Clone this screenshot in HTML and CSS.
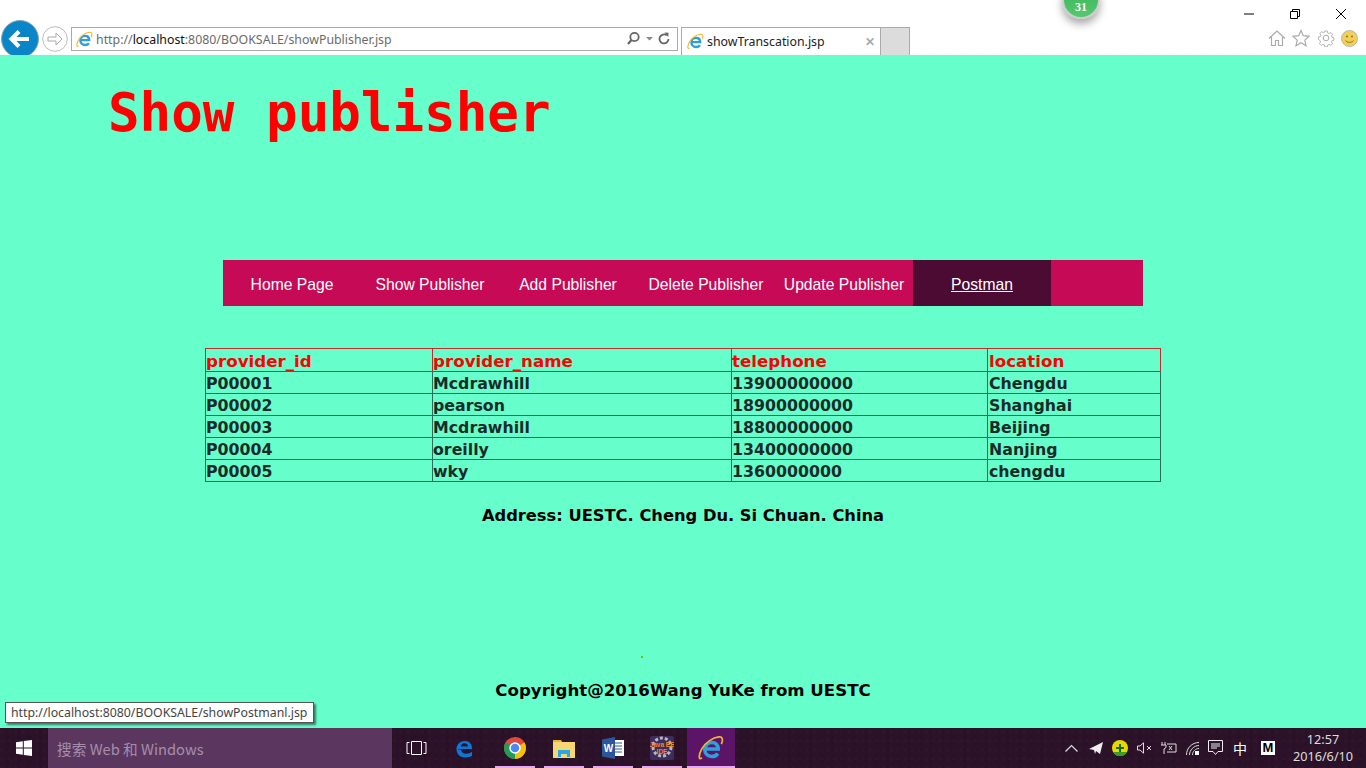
FILE: index.html
```html
<!DOCTYPE html>
<html lang="en">
<head>
<meta charset="utf-8">
<title>Show publisher</title>
<link rel="stylesheet" href="styles.css">
</head>
<body>
<svg class="defs" width="0" height="0" aria-hidden="true">
  <symbol id="ie" viewBox="0 0 20 20">
    <path d="M5 10.800h10.500c0-3.200-2-5-4.800-5-3.100 0-5.500 2.300-5.500 5.400 0 3.100 2.300 5.300 5.500 5.300 2 0 3.600-.8 4.500-2.300" fill="none" stroke="#2f9fdc" stroke-width="2.800"/>
    <path d="M3 17.500C0 20 .5 15 3 10.500 6 5.500 11.500 2 16 1.500c3-.3 3.500 2 2 5.500" fill="none" stroke="#f2b632" stroke-width="1.300"/>
  </symbol>
</svg>

<header class="chrome">
  <div class="nav-group">
    <svg class="back" width="38" height="38" viewBox="0 0 38 38">
      <circle cx="19" cy="19" r="18.500" fill="#0a86c8" stroke="#8aa" stroke-width="1"/>
      <path d="M28 19H11M18 11.500 10.500 19l7.500 7.500" fill="none" stroke="#fff" stroke-width="4"/>
    </svg>
    <svg class="forward" width="26" height="26" viewBox="0 0 26 26">
      <circle cx="13" cy="13" r="12.300" fill="#fff" stroke="#bbb"/>
      <path d="M6 11h8V7l6 6-6 6v-4H6z" fill="#fff" stroke="#aaa"/>
    </svg>
    <div class="address">
      <svg class="favicon" width="17" height="17"><use href="#ie"/></svg>
      <span class="url">http://<b>localhost</b>:8080/BOOKSALE/showPublisher.jsp</span>
      <svg class="addr-icons" width="44" height="16" viewBox="0 0 44 16">
        <circle cx="7.500" cy="6" r="4.200" fill="none" stroke="#666" stroke-width="1.800"/>
        <path d="M4.500 9 1 13" stroke="#666" stroke-width="2.200"/>
        <path d="M19 6h7l-3.500 3.500z" fill="#888"/>
        <path d="M41.500 8a4.500 4.500 0 1 1-1.700-3.600" fill="none" stroke="#666" stroke-width="1.800"/>
        <path d="M37.500 1.500l4 .2-.2 4.300z" fill="#666"/>
      </svg>
    </div>
    <div class="tab">
      <svg class="favicon" width="17" height="17"><use href="#ie"/></svg>
      <span class="tab-title">showTranscation.jsp</span>
      <span class="tab-close">✕</span>
    </div>
    <div class="new-tab"></div>
  </div>
  <div class="right-group">
    <div class="win-controls">
      <svg width="12" height="12" viewBox="0 0 12 12"><path d="M1 6h10" stroke="#000"/></svg>
      <svg width="12" height="12" viewBox="0 0 12 12"><path d="M1.500 3.500h7v7h-7zM3.500 3.500v-2h7v7h-2" fill="none" stroke="#000"/></svg>
      <svg width="12" height="12" viewBox="0 0 12 12"><path d="M1 1l10 10M11 1 1 11" stroke="#000"/></svg>
    </div>
    <div class="tools">
      <svg width="18" height="18" viewBox="0 0 18 18"><path d="M1 9.500 9 2l8 7.500M3.500 8v8.500h4v-5h3v5h4V8" fill="none" stroke="#aaa" stroke-width="1.200"/></svg>
      <svg width="18" height="18" viewBox="0 0 18 18"><path d="M9 1.500l2.300 5.200 5.700.6-4.200 3.800 1.200 5.600L9 13.800 4 16.700l1.200-5.600L1 7.300l5.700-.6z" fill="none" stroke="#aaa" stroke-width="1.200"/></svg>
      <svg width="18" height="18" viewBox="0 0 18 18"><circle cx="9" cy="9" r="2.800" fill="none" stroke="#aaa"/><path d="M7.500 1h3l.4 2.300 1.600.7 2-1.300 2 2.100-1.300 2 .7 1.500 2.100.4v2.800l-2.100.4-.7 1.600 1.300 2-2 2-2-1.300-1.600.7-.4 2.100h-3l-.4-2.100-1.600-.7-2 1.300-2-2 1.300-2-.7-1.600L.5 10.500V7.700l2.100-.4.700-1.500-1.300-2 2-2.100 2 1.300 1.600-.7z" fill="none" stroke="#aaa" transform="translate(1.100 1.100) scale(.88)"/></svg>
      <svg width="17" height="17" viewBox="0 0 17 17"><circle cx="8.500" cy="8.500" r="8" fill="#f2cf5b" stroke="#b9b9a0"/><circle cx="6" cy="6.500" r="1" fill="#8a7420"/><circle cx="11" cy="6.500" r="1" fill="#8a7420"/><path d="M4.500 10.500c1.500 2.500 6.500 2.500 8 0" fill="none" stroke="#8a7420"/></svg>
    </div>
  </div>
  <div class="badge"><span>31</span></div>
</header>

<main class="page">
  <h1 class="title">Show publisher</h1>
  <nav class="menu">
    <a class="menu-item">Home Page</a>
    <a class="menu-item">Show Publisher</a>
    <a class="menu-item">Add Publisher</a>
    <a class="menu-item">Delete Publisher</a>
    <a class="menu-item">Update Publisher</a>
    <a class="menu-item active">Postman</a>
  </nav>
  <table class="data">
    <colgroup><col class="c1"><col class="c2"><col class="c3"><col class="c4"></colgroup>
    <thead>
      <tr><th>provider_id</th><th>provider_name</th><th>telephone</th><th>location</th></tr>
    </thead>
    <tbody>
      <tr><td>P00001</td><td>Mcdrawhill</td><td>13900000000</td><td>Chengdu</td></tr>
      <tr><td>P00002</td><td>pearson</td><td>18900000000</td><td>Shanghai</td></tr>
      <tr><td>P00003</td><td>Mcdrawhill</td><td>18800000000</td><td>Beijing</td></tr>
      <tr><td>P00004</td><td>oreilly</td><td>13400000000</td><td>Nanjing</td></tr>
      <tr><td>P00005</td><td>wky</td><td>1360000000</td><td>chengdu</td></tr>
    </tbody>
  </table>
  <p class="address-line">Address: UESTC. Cheng Du. Si Chuan. China</p>
  <div class="dot"></div>
  <p class="copyright">Copyright@2016Wang YuKe from UESTC</p>
  <div class="status">http://localhost:8080/BOOKSALE/showPostmanl.jsp</div>
</main>

<footer class="taskbar">
  <div class="start">
    <svg width="18" height="18" viewBox="0 0 18 18"><path d="M1 3.200 7.800 2.200v6.300H1zM8.800 2.100 17 1v7.500H8.800zM1 9.500h6.800v6.300L1 14.800zM8.800 9.500H17V17l-8.200-1.100z" fill="#fff"/></svg>
  </div>
  <div class="search">搜索 Web 和 Windows</div>
  <div class="task-slot">
    <svg width="21" height="14" viewBox="0 0 21 14"><path d="M3.500 1.500H1v11h2.500M17.500 1.500H20v11h-2.500M5.500 .5h10v13h-10z" fill="none" stroke="#fff"/></svg>
  </div>
  <div class="task-slot">
    <svg width="22" height="22" viewBox="0 0 22 22"><path d="M2 12h15c.3-5-2.500-8-7-8C5 4 1.500 7.500 1.500 12c0 5 3.500 8.500 9 8.500 3 0 5-.7 6.500-1.700v-4c-1.500 1.200-3.500 2-6 2-2.500 0-4.500-1.500-5-3.800z" fill="#0a78d7"/><path d="M6 9.500h7c0-2-1.500-3.200-3.500-3.200S6.200 7.500 6 9.500z" fill="#2c1430"/></svg>
  </div>
  <div class="task-slot running">
    <svg width="22" height="22" viewBox="0 0 22 22"><circle cx="11" cy="11" r="11" fill="#dd4b3e"/><path d="M11 11 20.500 5.500A11 11 0 0 1 11 22z" fill="#f4c20d"/><path d="M11 11 11 22A11 11 0 0 1 1.500 5.500z" fill="#1e9e55"/><circle cx="11" cy="11" r="5" fill="#4a8af4" stroke="#fff" stroke-width="1.500"/></svg>
  </div>
  <div class="task-slot running">
    <svg width="22" height="20" viewBox="0 0 22 20"><path d="M0 2h8l1 2h13v16H0z" fill="#f7d774"/><path d="M0 2h8v2H0z" fill="#e2b53c"/><path d="M5 19v-7h12v7h-3v-3H8v3z" fill="#29a8e8"/></svg>
  </div>
  <div class="task-slot running">
    <svg width="22" height="22" viewBox="0 0 22 22"><path d="M9 3h13v16H9z" fill="#fff"/><path d="M11 6h9M11 9h9M11 12h9M11 15h9" stroke="#2b579a"/><path d="M0 2.500 13 0v22L0 19.500z" fill="#2b579a"/><text class="word-w" x="6.500" y="14.500">W</text></svg>
  </div>
  <div class="task-slot running">
    <svg width="24" height="24" viewBox="0 0 24 24"><rect width="24" height="24" rx="2" fill="#3f2c5e"/><circle cx="12" cy="11" r="9" fill="none" stroke="#b9b9b9" stroke-width="3" stroke-dasharray="3 2"/><text class="ide" x="12" y="11">Java EE</text><text class="ide" x="12" y="18">IDE</text></svg>
  </div>
  <div class="task-slot running current">
    <svg width="26" height="26"><use href="#ie"/></svg>
  </div>
  <div class="tray">
    <svg class="chev" width="13" height="8" viewBox="0 0 13 8"><path d="M.5 7.500 6.500 1.500l6 6" fill="none" stroke="#ddd" stroke-width="1.200"/></svg>
    <svg width="14" height="13" viewBox="0 0 14 13"><path d="M0 7 14 0l-3 12-4-3-1 3-1-4z" fill="#eee"/></svg>
    <svg width="16" height="16" viewBox="0 0 16 16"><circle cx="8" cy="8" r="8" fill="#e6d800"/><path d="M1 12a8 8 0 0 0 14 0z" fill="#3c9b2a"/><path d="M7 4h2v3h3v2H9v3H7V9H4V7h3z" fill="#176b1e"/></svg>
    <svg width="15" height="12" viewBox="0 0 15 12"><path d="M.5 4h2.500L6.500 .8v10.400L3 8H.5z" fill="none" stroke="#ddd"/><path d="M10 4l4 4M14 4l-4 4" stroke="#ddd"/></svg>
    <svg width="16" height="12" viewBox="0 0 16 12"><path d="M1 0v3M4 0v3M0 3h5v2.500L3 7v5M6 2h9v8H6" fill="none" stroke="#ddd"/><path d="M8 4l3 4M11 4 8 8" stroke="#ddd"/></svg>
    <svg width="13" height="13" viewBox="0 0 13 13"><path d="M.5 13C.5 6 6 .5 13 .5M3.500 13C3.500 8 8 3.500 13 3.500M6.500 13c0-3.500 3-6.500 6.500-6.500" fill="none" stroke="#ddd"/><rect x="9" y="9" width="4" height="4" fill="#fff"/></svg>
    <svg width="15" height="16" viewBox="0 0 15 16"><path d="M.5.5h14v11H10L7.500 14.500 5 11.500H.5zM3 4h9M3 6h9M3 8h6" fill="none" stroke="#eee"/></svg>
    <span class="ime">中</span>
    <span class="m-key">M</span>
    <div class="clock"><span>12:57</span><span>2016/6/10</span></div>
  </div>
</footer>
</body>
</html>
```
FILE: styles.css
```css
* { box-sizing: border-box; }
html, body { margin: 0; padding: 0; }
body {
  width: 1366px;
  height: 768px;
  overflow: hidden;
  display: flex;
  flex-direction: column;
  background: #66ffcc;
  font-family: "DejaVu Sans", sans-serif;
}
.defs { position: absolute; }

/* Browser chrome */
.chrome {
  position: relative;
  height: 55px;
  flex: none;
  display: flex;
  justify-content: space-between;
  background: #fff;
  overflow: hidden;
  font-family: "Noto Sans", sans-serif;
  font-size: 12.350px;
}
.nav-group {
  display: flex;
  align-items: flex-start;
  padding: 27px 0 0 1px;
}
.back { margin-top: -7px; flex: none; }
.forward { margin: -1px 0 0 3px; flex: none; }
.address {
  margin-left: 3px;
  width: 607px;
  height: 24px;
  border: 1px solid #aaa;
  display: flex;
  align-items: center;
  padding: 0 4px;
  gap: 3px;
}
.url { flex: 1; color: #6b6b6b; white-space: nowrap; }
.url b { font-weight: 400; color: #111; }
.addr-icons { flex: none; margin-right: 2px; }
.tab {
  margin-left: 3px;
  width: 200px;
  height: 28px;
  border: 1px solid #aaa;
  border-bottom: 0;
  display: flex;
  align-items: center;
  gap: 3px;
  padding: 0 5px;
}
.tab-title { flex: 1; color: #222; white-space: nowrap; }
.tab-close { color: #aaa; font-size: 12px; font-weight: 700; margin-right: 0; }
.new-tab {
  width: 29px;
  height: 28px;
  background: #dcdcdc;
  border: 1px solid #aaa;
  border-left: 0;
  border-bottom: 0;
}
.right-group {
  display: flex;
  flex-direction: column;
  align-items: flex-end;
  padding: 8px 8px 0 0;
  gap: 9px;
}
.win-controls {
  display: flex;
  gap: 34px;
  padding-right: 11px;
}
.tools {
  display: flex;
  gap: 6.500px;
  align-items: center;
}
.badge {
  position: absolute;
  left: 1062px;
  top: -19px;
  width: 38px;
  height: 38px;
  border-radius: 50%;
  background: linear-gradient(#35b455, #55c86e);
  border: 2px solid #ccc;
  box-shadow: 0 5px 9px rgba(0, 0, 0, .35);
  display: flex;
  align-items: flex-end;
  justify-content: center;
  padding-bottom: 2px;
  color: #fff;
  font: 700 12px "Liberation Serif", serif;
}

/* Page */
.page {
  position: relative;
  flex: 1;
  min-height: 0;
  display: flex;
  flex-direction: column;
  align-items: center;
}
.title {
  align-self: flex-start;
  margin: 26px 0 0 108px;
  height: 179px;
  font: 700 52.500px/64px "DejaVu Sans Mono", monospace;
  color: #f00;
}
.menu {
  width: 920px;
  height: 46px;
  flex: none;
  display: flex;
  background: #c60a56;
}
.menu-item {
  width: 138px;
  padding-top: 3px;
  display: flex;
  align-items: center;
  justify-content: center;
  color: #fff;
  font: 400 15.700px "Liberation Sans", sans-serif;
  white-space: nowrap;
}
.menu-item.active {
  background: #4c0b33;
  text-decoration: underline;
}
.data {
  margin-top: 42px;
  width: 955px;
  table-layout: fixed;
  border-collapse: collapse;
  flex: none;
  align-self: flex-start;
  margin-left: 205px;
}
.c1 { width: 227px; }
.c2 { width: 299px; }
.c3 { width: 256px; }
.c4 { width: 173px; }
.data th, .data td {
  height: 22px;
  padding: 2px 0 0;
  text-align: left;
  font-weight: 700;
  white-space: nowrap;
}
.data th:last-child, .data td:last-child { padding-left: 1px; }
.data th {
  height: 23px;
  border: 1px solid #c52a2a;
  color: #f00;
  font-size: 16.700px;
}
.data td {
  border: 1px solid #2f6b58;
  color: #1a2c28;
  font-size: 15.800px;
}
.address-line, .copyright {
  margin: 0;
  color: #000;
  font-weight: 700;
  line-height: 22px;
}
.address-line { margin-top: 23px; font-size: 16.300px; }
.dot {
  margin: 129px 0 0 -82px;
  width: 2px;
  height: 2px;
  background: #5fd000;
}
.copyright { margin-top: 22px; font-size: 16.600px; }
.status {
  position: absolute;
  left: 5px;
  top: 647px;
  width: 309px;
  height: 21px;
  padding-left: 5px;
  background: #fff;
  border: 1px solid #555;
  box-shadow: 2px 2px 2px rgba(0, 0, 0, .5);
  color: #444;
  font: 400 12.300px/19px "Noto Sans", sans-serif;
  white-space: nowrap;
}

/* Taskbar */
.taskbar {
  height: 40px;
  flex: none;
  display: flex;
  align-items: stretch;
  background:
    radial-gradient(circle at 30% 40%, rgba(90, 40, 60, .15), transparent 3px) 0 0 / 7px 9px,
    radial-gradient(circle at 70% 60%, rgba(15, 5, 15, .18), transparent 3px) 0 0 / 11px 6px,
    #2b1229;
  color: #fff;
}
.start {
  width: 48px;
  display: flex;
  align-items: center;
  justify-content: center;
}
.search {
  width: 344px;
  background: #5b3760;
  color: #a48eaa;
  padding-left: 9px;
  display: flex;
  align-items: center;
  font: 400 14.700px "Noto Sans CJK SC", "Noto Sans", sans-serif;
}
.task-slot {
  width: 49px;
  display: flex;
  align-items: center;
  justify-content: center;
  position: relative;
}
.task-slot.running::after {
  content: "";
  position: absolute;
  left: 5px;
  right: 4px;
  bottom: 0;
  height: 2px;
  background: #e8a8ec;
}
.task-slot.current {
  background: #5c1566;
  margin-left: 1px;
  width: 48px;
}
.task-slot.current::after { left: 0; right: 0; }
.word-w {
  fill: #fff;
  font: 700 10px "Liberation Sans", sans-serif;
  text-anchor: middle;
}
.ide {
  fill: #f08a24;
  font: 700 6.500px "Liberation Sans", sans-serif;
  text-anchor: middle;
}
.tray {
  margin-left: auto;
  display: flex;
  align-items: center;
  gap: 9px;
  padding-right: 12px;
}
.chev { margin-right: 2px; }
.ime { font: 400 14px "Noto Sans CJK SC", sans-serif; margin-left: 1px; }
.m-key {
  width: 14px;
  height: 14px;
  margin-left: 5px;
  background: #fff;
  color: #000;
  font: 700 13px/14px "Liberation Sans", sans-serif;
  text-align: center;
}
.clock {
  width: 62px;
  margin-left: 8px;
  display: flex;
  flex-direction: column;
  align-items: center;
  color: #ddd;
  font: 400 12.700px/17px "Noto Sans", sans-serif;
}
```
